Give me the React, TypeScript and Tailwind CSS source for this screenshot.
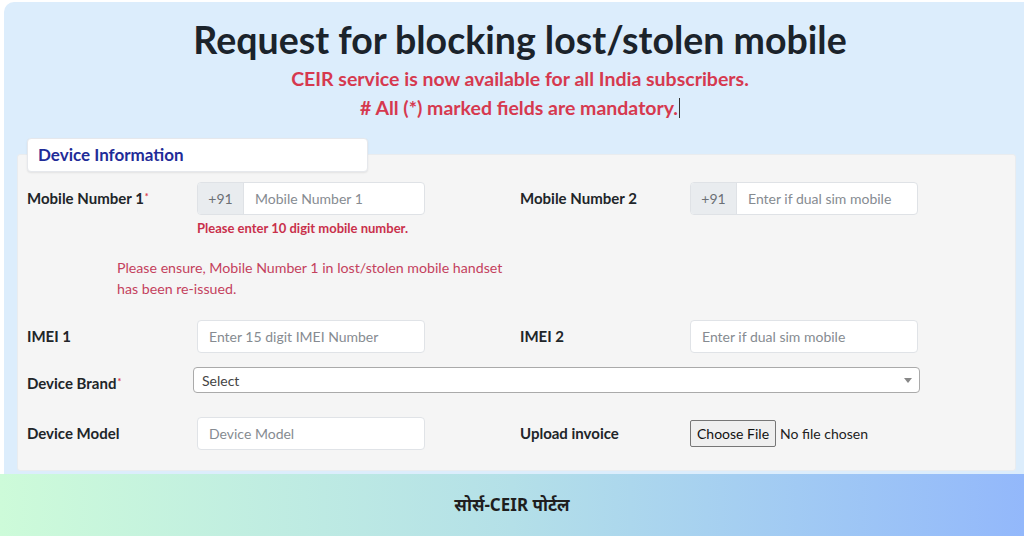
import React from "react";

const font = "font-['Lato',sans-serif]";

function Label({ text, required }: { text: string; required?: boolean }) {
  return (
    <div className="w-[170px] shrink-0 text-[15px] font-bold text-[#212529]">
      {text}
      {required && <sup className="text-[#dc3545] text-[9px] font-bold ml-[1px]">*</sup>}
    </div>
  );
}

function PhoneInput({ placeholder }: { placeholder: string }) {
  return (
    <div className="flex w-[228px] h-[33px] rounded-[4px] border border-[#dfe2e6] overflow-hidden bg-white">
      <div className="w-[46px] shrink-0 bg-[#e9ecef] border-r border-[#dfe2e6] flex items-center justify-center text-[14px] text-[#6c7075]">
        +91
      </div>
      <div className="flex items-center pl-[11px] text-[14px] text-[#868b91]">{placeholder}</div>
    </div>
  );
}

function TextInput({ placeholder }: { placeholder: string }) {
  return (
    <div className="w-[228px] h-[33px] rounded-[4px] border border-[#e0e3e7] bg-white flex items-center pl-[11px] text-[14px] text-[#868b91]">
      {placeholder}
    </div>
  );
}

function Field({ label, required, children }: { label: string; required?: boolean; children: React.ReactNode }) {
  return (
    <div className="flex items-center w-[493px] shrink-0">
      <Label text={label} required={required} />
      {children}
    </div>
  );
}

export default function App() {
  return (
    <div className={`w-[1024px] h-[536px] bg-white flex flex-col overflow-hidden ${font}`}>
      <div className="flex-1 ml-[4px] mt-[2px] rounded-tl-[10px] bg-[#dcedfc] flex flex-col">
        <div className="flex flex-col items-center pt-[14px]">
          <h1 className="text-[37.5px] leading-[48px] font-bold text-[#1b232b] ml-[12px]">
            Request for blocking lost/stolen mobile
          </h1>
          <p className="text-[19.5px] leading-[29px] font-bold text-[#d6394f] ml-[12px]">
            CEIR service is now available for all India subscribers.
          </p>
          <p className="text-[19.5px] leading-[29px] font-bold text-[#d6394f] ml-[12px] flex items-center">
            # All (*) marked fields are mandatory.
            <span className="inline-block w-[1px] h-[20px] bg-[#333] ml-[1px]" />
          </p>
        </div>

        <div className="mt-[32px] ml-[13px] mr-[8px] h-[317px] bg-[#f5f5f5] rounded-[3px] border border-[#e9ecef] px-[9px]">
          <div className="-mt-[17px] w-[341px] h-[34px] bg-white rounded-[4px] border border-[#e6e8ec] shadow-[0_1px_2px_rgba(0,0,0,0.08)] flex items-center pl-[10px]">
            <span className="text-[17px] font-bold text-[#1f2c98]">Device Information</span>
          </div>

          <div className="mt-[10px] flex">
            <Field label="Mobile Number 1" required>
              <PhoneInput placeholder="Mobile Number 1" />
            </Field>
            <Field label="Mobile Number 2">
              <PhoneInput placeholder="Enter if dual sim mobile" />
            </Field>
          </div>

          <div className="ml-[170px] mt-[5px] text-[13px] leading-[16px] font-bold text-[#c9304b]">
            Please enter 10 digit mobile number.
          </div>

          <div className="ml-[90px] mt-[21px] w-[400px] text-[14.2px] leading-[21px] text-[#c4415d]">
            Please ensure, Mobile Number 1 in lost/stolen mobile handset has been re-issued.
          </div>

          <div className="mt-[21px] flex">
            <Field label="IMEI 1">
              <TextInput placeholder="Enter 15 digit IMEI Number" />
            </Field>
            <Field label="IMEI 2">
              <TextInput placeholder="Enter if dual sim mobile" />
            </Field>
          </div>

          <div className="mt-[13px] flex items-center">
            <div className="w-[166px] shrink-0 text-[15px] font-bold text-[#212529] pt-[6px]">
              Device Brand
              <sup className="text-[#dc3545] text-[9px] font-bold ml-[1px]">*</sup>
            </div>
            <div className="w-[727px] h-[26px] rounded-[4px] border border-[#aaaaaa] bg-white flex items-center justify-between pl-[8px] pr-[7px]">
              <span className="text-[14px] text-[#444]">Select</span>
              <span className="w-0 h-0 border-l-[4px] border-r-[4px] border-t-[5px] border-l-transparent border-r-transparent border-t-[#888]" />
            </div>
          </div>

          <div className="mt-[22px] flex">
            <Field label="Device Model">
              <TextInput placeholder="Device Model" />
            </Field>
            <Field label="Upload invoice">
              <div className="flex items-center">
                <div className="h-[27px] px-[6px] rounded-[2px] border border-[#767676] bg-[#efefef] flex items-center text-[14px] text-[#111]">
                  Choose File
                </div>
                <span className="ml-[4px] text-[14px] text-[#222]">No file chosen</span>
              </div>
            </Field>
          </div>
        </div>
        <div className="flex-1" />
      </div>

      <div className="h-[62px] shrink-0 bg-linear-to-r from-[#cdfbd9] via-[#b4e0e8] to-[#93b8fb] flex items-center justify-center">
        <span className="text-[17px] font-bold text-[#1e1e1e] font-['Noto_Sans',sans-serif]">सोर्स-CEIR पोर्टल</span>
      </div>
    </div>
  );
}
